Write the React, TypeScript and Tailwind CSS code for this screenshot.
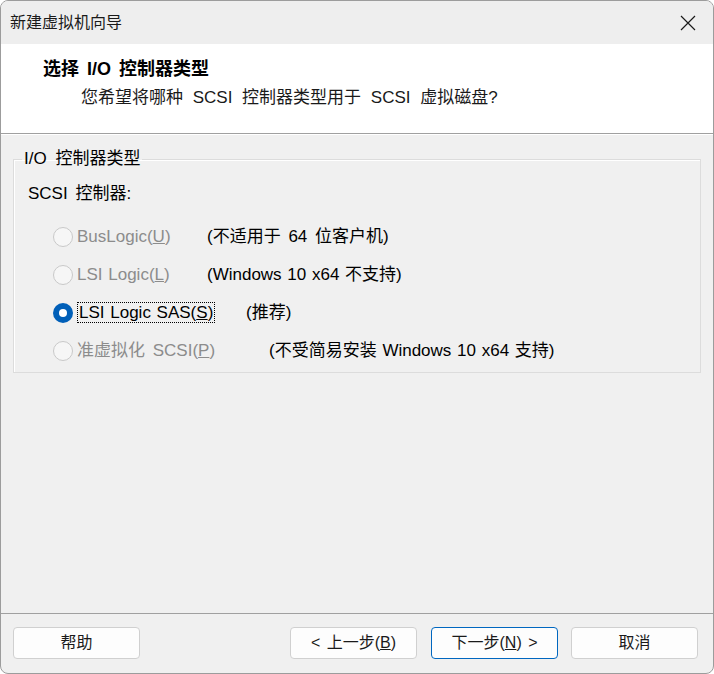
import React from "react";

const font = "font-['Liberation_Sans','Noto_Sans_CJK_SC',sans-serif]";

function Radio({ checked, disabled }: { checked?: boolean; disabled?: boolean }) {
  if (checked) {
    return (
      <span className="flex h-[20px] w-[20px] items-center justify-center rounded-full bg-[#005fb8]">
        <span className="h-[8px] w-[8px] rounded-full bg-white" />
      </span>
    );
  }
  return (
    <span
      className={
        disabled
          ? "h-[20px] w-[20px] rounded-full border border-[#c9c9c9] bg-[#f6f6f6]"
          : "h-[20px] w-[20px] rounded-full border border-[#8a8a8a] bg-white"
      }
    />
  );
}

function Btn({ children, primary }: { children: React.ReactNode; primary?: boolean }) {
  return (
    <button
      className={
        primary
          ? "flex h-[32px] w-[127px] items-center justify-center rounded-[4px] border border-[#0067c0] bg-[#fdfdfd] text-[16px] text-[#1a1a1a] [word-spacing:2px]"
          : "flex h-[32px] w-[127px] items-center justify-center rounded-[4px] border border-[#d0d0d0] bg-[#fdfdfd] text-[16px] text-[#1a1a1a] [word-spacing:2px]"
      }
    >
      {children}
    </button>
  );
}

export default function App() {
  return (
    <div className={`${font} flex h-[674px] w-[714px] flex-col overflow-hidden rounded-[8px] border border-[#9c9c9c] bg-[#f0f0f0] text-black`}>
      {/* title bar */}
      <div className="flex h-[43px] items-center justify-between bg-[#eeeeee] pl-[9px] pr-[17px]">
        <span className="text-[16px] text-[#1a1a1a]">新建虚拟机向导</span>
        <svg width="16" height="16" viewBox="0 0 16 16" className="text-[#1a1a1a]">
          <path d="M1 1L15 15M15 1L1 15" stroke="currentColor" strokeWidth="1.2" fill="none" />
        </svg>
      </div>

      {/* header */}
      <div className="flex h-[90px] flex-col border-b border-[#a0a0a0] bg-white pl-[42px] pt-[12px]">
        <div className="text-[18px] font-bold leading-[26px] [word-spacing:3px]">选择 I/O 控制器类型</div>
        <div className="pl-[38px] pt-[2px] text-[17px] leading-[28px] text-[#1a1a1a] [word-spacing:5px]">
          您希望将哪种 SCSI 控制器类型用于 SCSI 虚拟磁盘?
        </div>
      </div>
      <div className="h-px bg-white" />

      {/* group box */}
      <div className="flex-1 px-[12px] pt-[14px]">
        <fieldset className="h-[224px] border border-[#dcdcdc] pl-[14px] text-[17px] shadow-[inset_1px_1px_0_#fff] [word-spacing:1px]">
          <legend className="ml-[-6px] px-[2px] leading-[20px] [word-spacing:4px]">I/O 控制器类型</legend>
          <div className="pt-[14px] leading-[22px] [word-spacing:3px]">SCSI 控制器:</div>
          <div className="mt-[13px] flex flex-col">
            <div className="flex h-[38px] items-center pl-[25px]">
              <Radio disabled />
              <span className="ml-[4px] w-[130px] text-[#8c8c8c]">
                BusLogic(<span className="underline">U</span>)
              </span>
              <span className="[word-spacing:3px]">(不适用于 64 位客户机)</span>
            </div>
            <div className="flex h-[38px] items-center pl-[25px]">
              <Radio disabled />
              <span className="ml-[4px] w-[130px] text-[#8c8c8c]">
                LSI Logic(<span className="underline">L</span>)
              </span>
              <span>(Windows 10 x64 不支持)</span>
            </div>
            <div className="flex h-[38px] items-center pl-[25px]">
              <Radio checked />
              <span className="ml-[4px] w-[169px]">
                <span className="border border-dotted border-black px-px">
                  LSI Logic SAS(<span className="underline">S</span>)
                </span>
              </span>
              <span>(推荐)</span>
            </div>
            <div className="flex h-[38px] items-center pl-[25px]">
              <Radio disabled />
              <span className="ml-[4px] w-[192px] text-[#8c8c8c] [word-spacing:3px]">
                准虚拟化 SCSI(<span className="underline">P</span>)
              </span>
              <span>(不受简易安装 Windows 10 x64 支持)</span>
            </div>
          </div>
        </fieldset>
      </div>

      {/* footer */}
      <div className="h-px bg-[#a0a0a0]" />
      <div className="flex h-[59px] items-start pt-[13px] pl-[12px] pr-[15px]">
        <Btn>帮助</Btn>
        <div className="ml-auto flex gap-[13px]">
          <div className="flex gap-[14px]">
            <Btn>
              &lt; 上一步(<span className="underline">B</span>)
            </Btn>
            <Btn primary>
              下一步(<span className="underline">N</span>) &gt;
            </Btn>
          </div>
          <Btn>取消</Btn>
        </div>
      </div>
    </div>
  );
}
